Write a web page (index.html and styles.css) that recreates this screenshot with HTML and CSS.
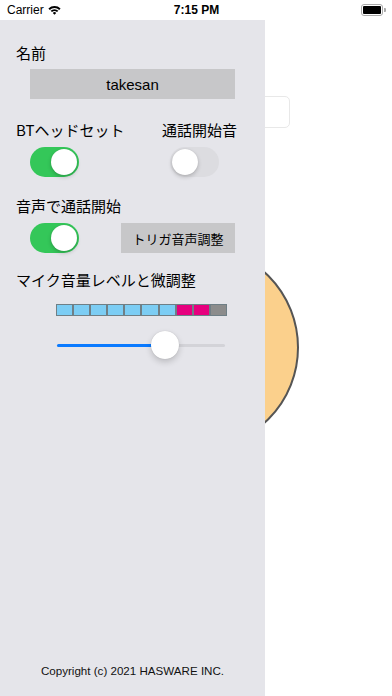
FILE: index.html
```html
<!DOCTYPE html>
<html lang="ja">
    <head>
        <meta charset="UTF-8" />
        <meta name="viewport" content="width=device-width, initial-scale=1.0" />
        <title>設定</title>
        <link rel="stylesheet" href="styles.css">
    </head>
    <body>
        <!-- 상태바 -->
        <div class="status">
            <div class="carrier">
                Carrier
                <svg class="wifi" width="13" height="10" viewBox="0 0 13 10">
                    <path d="M0.4 3.4 A9 9 0 0 1 12.6 3.4 L11.2 4.9 A7 7 0 0 0 1.8 4.9 Z" fill="#000"/>
                    <path d="M2.6 5.7 A5.7 5.7 0 0 1 10.4 5.7 L9 7.1 A3.7 3.7 0 0 0 4 7.1 Z" fill="#000"/>
                    <path d="M4.8 7.9 A2.5 2.5 0 0 1 8.2 7.9 L6.5 9.7 Z" fill="#000"/>
                </svg>
            </div>
            <div class="time">7:15 PM</div>
            <div class="battery">
                <div class="batBody"><div class="batFill"></div></div>
                <div class="batNub"></div>
            </div>
        </div>

        <!-- 뒤쪽 메인화면 -->
        <div class="main">
            <div class="field"></div>
            <div class="circle"></div>
        </div>

        <!-- 설정 드로어 -->
        <div class="panel">
            <div class="lbl first">名前</div>
            <div class="btn nameBtn">takesan</div>

            <div class="row2 gapTop">
                <div class="lbl">BTヘッドセット</div>
                <div class="lbl">通話開始音</div>
            </div>
            <div class="toggles">
                <div class="sw on"><span class="knob"></span></div>
                <div class="sw off sw2"><span class="knob"></span></div>
            </div>

            <div class="lbl gapTop2">音声で通話開始</div>
            <div class="toggles t2">
                <div class="sw on"><span class="knob"></span></div>
                <div class="btn trigBtn">トリガ音声調整</div>
            </div>

            <div class="lbl gapTop3">マイク音量レベルと微調整</div>
            <div class="meter">
                <span class="seg blue"></span>
                <span class="seg blue"></span>
                <span class="seg blue"></span>
                <span class="seg blue"></span>
                <span class="seg blue"></span>
                <span class="seg blue"></span>
                <span class="seg blue"></span>
                <span class="seg red"></span>
                <span class="seg red"></span>
                <span class="seg gray"></span>
            </div>
            <div class="slider">
                <div class="track">
                    <div class="fill" style="width: 64%"></div>
                    <div class="thumb" style="left: 64%"></div>
                </div>
            </div>

            <div class="copy">Copyright (c) 2021 HASWARE INC.</div>
        </div>
    </body>
</html>
```

FILE: styles.css
```css
html,
body {
    margin: 0;
    padding: 0;
}
body {
    position: relative;
    width: 392px;
    height: 696px;
    overflow: hidden;
    background: #fff;
    font-family: "Liberation Sans", "Noto Sans CJK JP", sans-serif;
    color: #000;
}

/* 상태바 */
.status {
    display: flex;
    align-items: center;
    justify-content: space-between;
    height: 20px;
    padding: 0 6px 0 7px;
    font-size: 12px;
}
.carrier {
    display: flex;
    align-items: center;
    gap: 4px;
    width: 80px;
}
.time {
    font-weight: bold;
}
.battery {
    display: flex;
    align-items: center;
    justify-content: flex-end;
    width: 80px;
}
.batBody {
    width: 18px;
    height: 8px;
    padding: 1px;
    border: 1px solid #aaa;
    border-radius: 3px;
}
.batFill {
    height: 100%;
    background: #000;
    border-radius: 1px;
}
.batNub {
    width: 2px;
    height: 4px;
    margin-left: 1px;
    background: #aaa;
    border-radius: 0 1px 1px 0;
}

/* 뒤쪽 메인화면 */
.main {
    display: flex;
    flex-direction: column;
    align-items: center;
}
.field {
    width: 186px;
    height: 30px;
    margin-top: 76px;
    border: 1px solid #e8e8e8;
    border-radius: 5px;
}
.circle {
    width: 201px;
    height: 201px;
    margin-top: 117px;
    background: #fbd08c;
    border: 2px solid #555;
    border-radius: 50%;
}

/* 설정 드로어 */
.panel {
    position: absolute;
    top: 20px;
    left: 0;
    bottom: 0;
    width: 265px;
    display: flex;
    flex-direction: column;
    padding-left: 16px;
    box-sizing: border-box;
    background: #e5e5ea;
}
.lbl {
    font-family: "Noto Sans CJK JP", sans-serif;
    font-size: 15px;
    line-height: 20px;
    white-space: nowrap;
}
.first {
    margin-top: 23px;
}
.btn {
    display: flex;
    align-items: center;
    justify-content: center;
    height: 30px;
    background: #c7c7c9;
}
.nameBtn {
    width: 205px;
    margin: 6px 0 0 14px;
    font-size: 15px;
}
.gapTop {
    margin-top: 21px;
}
.row2 {
    display: flex;
}
.row2 .lbl:first-child {
    width: 146px;
}
.toggles {
    display: flex;
    align-items: center;
    margin: 7px 0 0 14px;
}
.t2 {
    margin-top: 7px;
}
.sw {
    position: relative;
    width: 49px;
    height: 30px;
    border-radius: 15px;
}
.sw.on {
    background: #34c759;
}
.sw.off {
    background: #dcdce0;
}
.sw2 {
    margin-left: 91px;
}
.knob {
    position: absolute;
    top: 2px;
    width: 26px;
    height: 26px;
    border-radius: 50%;
    background: #fff;
    box-shadow: 0 2px 4px rgba(0, 0, 0, 0.2), 0 0 1px rgba(0, 0, 0, 0.15);
}
.on .knob {
    right: 2px;
}
.off .knob {
    left: 2px;
}
.trigBtn {
    width: 114px;
    margin-left: 42px;
    font-family: "Noto Sans CJK JP", sans-serif;
    font-size: 13px;
}
.gapTop2 {
    margin-top: 19px;
}
.gapTop3 {
    margin-top: 17px;
}

/* 레벨미터 */
.meter {
    display: flex;
    gap: 2px;
    width: 171px;
    height: 12px;
    margin: 14px 0 0 40px;
    padding: 1px;
    box-sizing: border-box;
    background: #6f7f86;
}
.seg {
    flex: 1;
}
.blue {
    background: #7ccdf4;
}
.red {
    background: #e6007e;
}
.gray {
    background: #8c8c8c;
}

/* 슬라이더 */
.slider {
    display: flex;
    align-items: center;
    height: 28px;
    margin: 15px 0 0 41px;
    width: 168px;
}
.track {
    position: relative;
    width: 100%;
    height: 3px;
    border-radius: 2px;
    background: #d3d3d8;
}
.fill {
    height: 100%;
    border-radius: 2px;
    background: #0a7aff;
}
.thumb {
    position: absolute;
    top: 50%;
    width: 28px;
    height: 28px;
    margin: -14px 0 0 -14px;
    border-radius: 50%;
    background: #fff;
    box-shadow: 0 3px 6px rgba(0, 0, 0, 0.18), 0 0 1px rgba(0, 0, 0, 0.2);
}

/* 카피라이트 */
.copy {
    margin-top: auto;
    margin-bottom: 18px;
    margin-left: -16px;
    text-align: center;
    font-size: 11.6px;
    line-height: 14px;
    color: #111;
}
```
